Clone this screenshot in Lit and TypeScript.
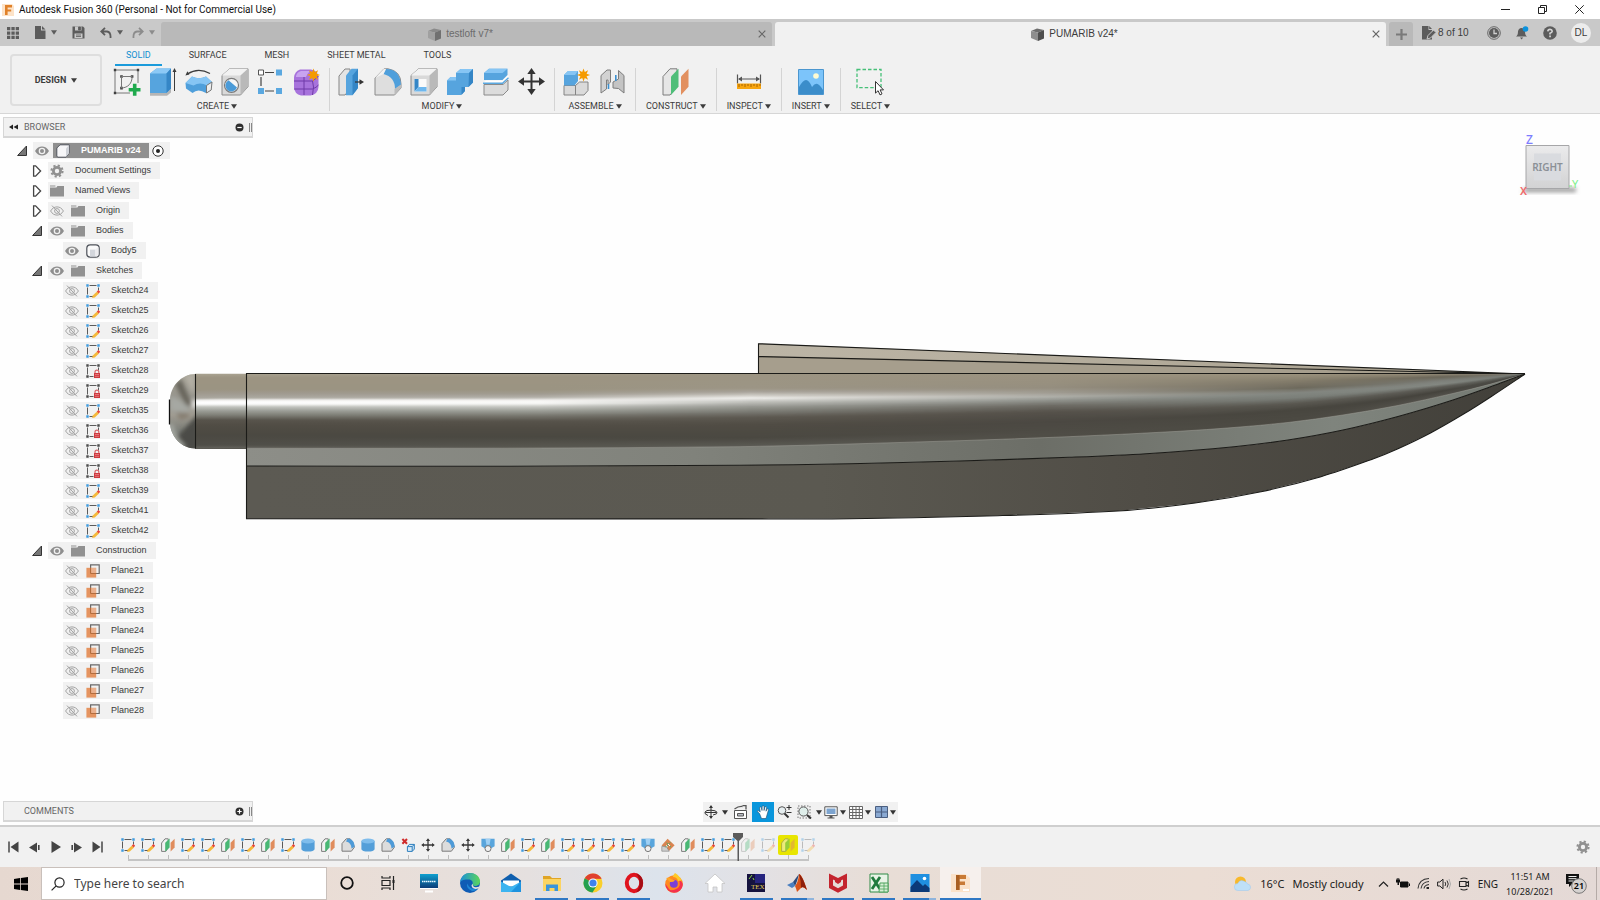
import { LitElement, html, svg, css, nothing, TemplateResult, SVGTemplateResult } from "lit";
import { customElement, property } from "lit/decorators.js";
import { classMap } from "lit/directives/class-map.js";

/* ------------------------------------------------------------------ icons */

const dotted = (corner: string) => svg`
  <path d="M3.500 1.500h7M1.500 3.500v7M3.500 12.500h4M12.500 3.500v3" stroke="#5a5a5a" fill="none"/>
  <path d="M.3.300h2.400v2.400H.3zM11.300.300h2.400v2.400h-2.400zM.3 11.300h2.400v2.400H.3z" fill=${corner}/>`;

const planes = svg`
  <path d="M.6 5 4 .8h3.2v9L4.8 13.4H.6z" fill="#f2f2f2" stroke="#7d7d7d"/>
  <path d="M4.2 4.8 8.6.6v9L4.2 13.6z" fill="#49b774"/>
  <path d="M9.6 4.8 13.6.8v8.8l-4 4z" fill="#e08c5c"/>`;

const star = (x: number, y: number) => svg`
  <path transform="translate(${x} ${y})" d="M0-6.6 1.3-3 4.6-4.7 3.1-1.3 6.6 0 3.1 1.3 4.6 4.7 1.3 3 0 6.6-1.3 3-4.6 4.7-3.1 1.3-6.6 0-3.1-1.3-4.6-4.7-1.3-3z" fill="#f59b00"/>`;

const gear = svg`
  <circle cx="7" cy="7" r="3.6" fill="none" stroke="#909090" stroke-width="2.8"/>
  <circle cx="7" cy="7" r="5.6" fill="none" stroke="#909090" stroke-width="2" stroke-dasharray="2.2 2.2"/>`;

const I14: Record<string, SVGTemplateResult> = {
  sketch: svg`${dotted("#3d9be0")}
    <path d="m6 14 .8-2.600 4.200-4 2 2-4.200 4z" fill="#f5b93c"/>
    <path d="m10.800 7.600 1.600-1.600 1.800 1.800-1.600 1.600z" fill="#e8483c"/>`,
  locked: svg`${dotted("#4a4a4a")}
    <path d="M9 9V8a1.800 1.800 0 0 1 3.800 0V9" fill="none" stroke="#d9676b" stroke-width="1.200"/>
    <path d="M8 9h6v5H8z" fill="#cf3a40"/><path d="M9 10.500h4M9 12.300h4" stroke="#ef8f92" stroke-width=".7"/>`,
  plane: svg`<path d="M4.6 9.4V.9h8.6v8.6H5" fill="none" stroke="#6a6a6a" stroke-width="1.2"/>
    <path d="M.4 3.8h9.8v9.8H.4z" fill="#e38a50" fill-opacity=".9"/><path d="M4.6 3.8v5.6h5.6" fill="none" stroke="#b06a3c"/>
    <path d="M5.2 4h4.8v5H5.2z" fill="#ebb08c"/>`,
  planes,
  folder: svg`<path d="M0 1.4h5.4v1.2H0zM0 3.4h6.4l1-1.4H14v10.6H0z" fill="#919191"/>`,
  gear,
  body: svg`<rect x=".8" y=".8" width="12.4" height="12.4" rx="3.4" fill="#fafafa" stroke="#4e525a" stroke-width="1.2"/>
    <path d="M4 5.6h5.4v7H4z" fill="#d3d6dc"/><path d="M9.4 5.6 12.4 3v8l-1.8 1.6H9.4z" fill="#ececef"/>`,
  cube: svg`<path d="M.8 4 4 .8h9.2v8.4L10 13.2H1.6L.8 12z" fill="#f6f6f8" stroke="#51555d" stroke-width="1"/>
    <path d="M10 4.4 13 1v8l-3 4z" fill="#cfd2d8"/>`,
  eye: svg`<path d="M0 7c1.8-3.2 4.2-4.6 7-4.6S12.200 3.800 14 7c-1.800 3.200-4.200 4.600-7 4.600S1.800 10.200 0 7z" fill="#8e8e8e"/>
    <circle cx="7" cy="7" r="3.300" fill="#f1f1f1"/><circle cx="7" cy="7" r="2" fill="#8e8e8e"/>`,
  eyeOff: svg`<path d="M.6 7C2.200 4.200 4.400 2.900 7 2.900S11.800 4.200 13.400 7C11.800 9.800 9.600 11.100 7 11.100S2.200 9.800.6 7z" fill="none" stroke="#a3a3a3"/>
    <circle cx="7" cy="7" r="2.400" fill="none" stroke="#a3a3a3"/><path d="m2 1.600 10 10.800" stroke="#a3a3a3"/>`,
  cylinder: svg`<path d="M.4 3v8c0 1.600 3 2.600 6.600 2.600s6.600-1 6.600-2.600V3z" fill="#549fd9"/><ellipse cx="7" cy="3" rx="6.600" ry="2.400" fill="#7fbdec"/>`,
  fillet: svg`<path d="M1 13.200V5.600L5.200.8h4L12 4.800l1.400 4.400-3 4z" fill="#dcdcdc" stroke="#7c7c7c"/>
    <path d="M6.600.6c4 .2 7 3 7 8.200l-3 1.600C10.200 6.600 8.600 4.400 5 3.600z" fill="#4e9bd8"/>`,
  remove: svg`<path d="m1.400 1 4.600 4.800M6 1 1.400 5.800" stroke="#cf2b2b" stroke-width="2"/>
    <path d="M6.400 8.600h4.800v4.800H6.400zM6.400 8.600l2-2.200h4.900v4.700l-2.100 2.300M11.200 8.600l2.100-2.200" fill="#d6e9f7" stroke="#2d7fbd"/>`,
  move: svg`<path d="M7 1.500v11M1.500 7h11" stroke="#3a3a3a" stroke-width="1.300"/>
    <path d="M7 .2 9.100 3H4.900zM7 13.800 9.100 11H4.900zM.2 7 3 4.900v4.200zM13.800 7 11 4.900v4.200z" fill="#3a3a3a"/>`,
  loft: svg`<path d="M.4.800h13.200v7.400l-3.400 2H3.800l-3.400-2z" fill="#59a5dc"/><path d="M4.400.800h5.200l-1 6H5.400z" fill="#9fd0f4"/>
    <circle cx="7" cy="10.600" r="3" fill="#f1f1f1" stroke="#777"/>`,
  patch: svg`<path d="m.6 7.600 6-6.800 7 6.400-5.400 5.600z" fill="#d98450"/><path d="M.8 8.400h4.400l3 4.800H.8z" fill="#cfcfcf" stroke="#888" stroke-width=".7"/>
    <path d="m4.400 9.400 5-5M5.600 4.800l4.400 4.400" stroke="#4fae6e"/><path d="m7 6 2 2M5 7.400l1.600 1.400" stroke="#fff"/>`,
};

const I28: Record<string, SVGTemplateResult> = {
  sketch: svg`<path d="M2 2h23M2 2v23h15M25 2v13" stroke="#777" fill="none"/>
    <path d="M.8.800h2.400v2.400H.8zM23.800.800h2.400v2.400h-2.400zM.8 23.800h2.400v2.400H.8zM7.200 7.200h2.600v2.600H7.200zM17.800 7.200h2.600v2.600h-2.600zM7.200 18.800h2.600v2.600H7.200z" fill="#3f3f3f"/>
    <path d="M8.500 8.500v11.600M8.500 8.500h10.600c0 7-4 11-10.600 11.600" stroke="#777" fill="none"/>
    <path d="M19.900 15.800h3.600V20h4v3.600h-4v4.200h-3.600v-4.200h-4.200V20h4.200z" fill="#1faa4d"/>`,
  extrude: svg`<path d="M1 24.500h17l4-4v4l-4 3.200H1z" fill="#b5b5b5"/><path d="M1 5.500 7.500.5H22v20l-4.500 4.500H1z" fill="#56a4de"/>
    <path d="M1 5.500 7.500.5H22l-4.500 5z" fill="#8cc9f6"/><path d="M17.500 5.500 22 .5v20L17.500 25z" fill="#3586c6"/>
    <path d="M25.500 3v20" stroke="#3c3c3c"/><path d="m25.500 0 2 4h-4z" fill="#3c3c3c"/>`,
  revolve: svg`<path d="M2.500 6Q13-1 25 5.500" stroke="#3c3c3c" fill="none" stroke-width="1.200"/><path d="m.4 7.400 2-4.200 2 3.200z" fill="#3c3c3c"/>
    <path d="M.5 15 7 8.500q7 3.500 14 0l6 5.500-1 8-5 3q-8-5-13.500 0L1 20.500z" fill="#4f9fdb"/>
    <path d="M.5 15 7 8.500q7 3.500 14 0l6 5.500-5 3.500q-7-4-13.500 0z" fill="#86c5f4"/>
    <path d="m21.500 17.500 5.500-3.500-.8 8-4.700 3z" fill="#eee" stroke="#777"/>`,
  hole: svg`<path d="M1 7.500 8.500.8H27v18L19.500 27H1z" fill="#d9d9d9" stroke="#8a8a8a"/><path d="M1 7.500 8.500.8H27l-7.500 6.700z" fill="#f2f2f2"/>
    <path d="M19.500 7.500 27 .8v18L19.500 27z" fill="#b9b9b9"/><circle cx="10.500" cy="17.300" r="7" fill="#f6f6f6" stroke="#7a7a7a" stroke-width="1.200"/>
    <path d="M7.500 12.200a6 6 0 1 0 8.500 7.400z" fill="#4b9bd8"/>`,
  pattern: svg`<path d="M8 4.500h9M4 9v9M8 23h9" stroke="#444" stroke-width="1.200"/><path d="M1.500 2h5v5h-5z" fill="#fff" stroke="#555"/>
    <path d="M19 1.500h6v6h-6zM1 20h6v6H1zM19 20h6v6h-6z" fill="#5aa8e0"/>`,
  form: svg`<path d="M1 9.500q.5-6 6-8h11q7 1 7.500 8V19q-.5 7-8 8.500H8q-6.500-1.500-7-8z" fill="#a773dc"/>
    <path d="M3 8q1-4 5-5h9q-3 3-4 6H3z" fill="#c8a4f0"/><path d="M1 13h18.500q4.500-3 6-5M11 27V9M19.500 27q2-9 0-14M1 21h18.500q4-1.500 6-4" stroke="#6f3ba8" fill="none"/>${star(20.500, 7)}`,
  press: svg`<path d="M1 8 7 1h5v20l-5 6H1z" fill="#e4e4e4" stroke="#858585"/><path d="M8 7.500 13.500.8H20V20l-5.500 7.200H8z" fill="#56a4de"/>
    <path d="M14.500 7.500 20 .8V20l-5.500 7.200z" fill="#3586c6"/><path d="M17 14h7" stroke="#333" stroke-width="1.200"/><path d="m26 14-4.500-2.800v5.600z" fill="#333"/>`,
  fillet: svg`<path d="M1 10 10 .8h4Q27 3 27 16v4l-6.500 7H1z" fill="#dedede" stroke="#8a8a8a"/><path d="M12 1q14 0 15 16l-6 4Q21 9 9.500 6z" fill="#4f9fdb"/>
    <path d="M20.500 21 27 16.500V20l-6.500 7z" fill="#bcbcbc"/><path d="M12 1 9.500 6 1 10 10 .8z" fill="#f2f2f2"/>`,
  shell: svg`<path d="M1 7.500 8.500.8H27v18L19.500 27H1z" fill="#d9d9d9" stroke="#8a8a8a"/><path d="M1 7.500 8.500.8H27l-7.500 6.700z" fill="#f2f2f2"/>
    <path d="M19.500 7.500 27 .8v18L19.500 27z" fill="#b9b9b9"/><path d="M4.500 11h12v12.500h-12z" fill="#fafafa"/>
    <path d="M4.500 11h4v8l-4 4.500z" fill="#3586c6"/><path d="m4.500 23.500 4-4.500h8v4.500z" fill="#6db7ee"/>`,
  combine: svg`<path d="M1 12.500 4.500 9H10V5l4.500-4H27v13.500L22.500 19H19v4l-4 4H1z" fill="#56a4de"/>
    <path d="M10 5l4.500-4H27l-4 4zM1 12.500 4.500 9H10v3.500z" fill="#86c5f4"/><path d="M23 5l4-4v13.500L22.500 19zM15.500 19H19v4l-3.500 4z" fill="#3586c6"/>`,
  split: svg`<path d="M2 16.500h19l5-4.500v10l-5 5H2z" fill="#dcdcdc" stroke="#8a8a8a"/><path d="M2 5 7 .800h18.500V7l-5 5H2z" fill="#56a4de"/>
    <path d="M2 5 7 .8h18.500l-5 4.200z" fill="#86c5f4"/><path d="M.5 15.500 4 12.500h16.500L26.500 7v3.500l-6 5z" fill="#fff"/><path d="M1 15.300h19.500l6-5.500" stroke="#5aa8e0" fill="none" stroke-width="1.400"/>`,
  move: svg`<path d="M13.500 3v21M3 13.500h21" stroke="#333" stroke-width="2"/>
    <path d="M13.500 0l4.200 6H9.300zM13.500 27l4.200-6H9.300zM0 13.500l6-4.200v8.400zM27 13.500l-6-4.200v8.400z" fill="#333"/>`,
  component: svg`<path d="M1 17.500h11.500V27H1zM12.500 17.500 16.500 14H25v8.500L21 27h-8.500z" fill="#dadada" stroke="#848484"/><path d="M1 7 5 3h10v10l-3.500 4.500H1z" fill="#56a4de"/>
    <path d="M1 7l4-4h10l-3 4z" fill="#86c5f4"/>${star(20.500, 7)}`,
  joint: svg`<path d="M2 7.500 8 2h3.500v12L9 16.500V12H7.500v9L2 25z" fill="#d2d2d2" stroke="#7d7d7d"/>
    <path d="M25 25V7.500L19.500 2.500V11L14 14v6l5.500.5L25 25z" fill="#c4c4c4" stroke="#7d7d7d"/><path d="M16.800 7v6M9.500 16v5" stroke="#3b90d0" stroke-width="1.600"/>`,
  construct: svg`<path d="M1 8.500 8 .8h7v18L8 27H1z" fill="#e6e6e6" stroke="#7d7d7d"/><path d="M9 8.500 16.500.8v18L9 27z" fill="#4fbe79"/><path d="M19 8.500 26.500.800v18L19 27z" fill="#e2905f"/>`,
  inspect: svg`<path d="M2.500 6.500v9M25.500 6.500v9M4 11h20" stroke="#555" stroke-width="1.200"/><path d="m3 11 4-2.500v5zM25 11l-4-2.500v5z" fill="#555"/>
    <path d="M2 15.500h24V21H2z" fill="#f7a510"/><path d="M4 16v3M7 16v2M10 16v3M13 16v2M16 16v3M19 16v2M22 16v3M25 16v2" stroke="#a86400"/>`,
  insert: svg`<path d="M1.500 1.500h25v25h-25z" fill="#7cc4fa" stroke="#4b96cf"/><path d="M2 19q4-7 7-7t6 7q3-4 5.500-3t5.500 6v4H2z" fill="#3b8dca"/><circle cx="19" cy="8" r="2.800" fill="#fffbd2"/>`,
  select: svg`<path d="M1 1.500h24v18.200H1z" fill="none" stroke="#46c078" stroke-width="1.300" stroke-dasharray="3.500 2"/>
    <path d="M19.500 13.500v11.600l2.600-2.400 1.900 4.200 2-1-1.900-4h3.400z" fill="#fff" stroke="#333"/>`,
};

const caret = () => html`<svg class="caret" viewBox="0 0 6 5" aria-hidden="true"><path d="M0 .3h6L3 4.700z" fill="currentColor"/></svg>`;
const i14 = (n: string) => html`<svg class="i14" viewBox="0 0 14 14" aria-hidden="true">${I14[n]}</svg>`;
const i28 = (n: string) => html`<svg class="i28" viewBox="0 0 28 28" aria-hidden="true">${I28[n]}</svg>`;
const box = (w: number, h: number, body: SVGTemplateResult) =>
  html`<svg width=${w} height=${h} viewBox="0 0 ${w} ${h}" aria-hidden="true">${body}</svg>`;

const shared = css`
  :host, *, *::before, *::after { box-sizing: border-box; }
  button { font: inherit; color: inherit; background: none; border: 0; padding: 0; margin: 0; display: inline-flex; align-items: center; justify-content: center; white-space: nowrap; }
  svg { display: block; flex: none; }
  .i14 { width: 14px; height: 14px; }
  .i28 { width: 28px; height: 28px; }
  .caret { width: 6px; height: 5px; }
`;

/* ------------------------------------------------------------- title bars */

@customElement("window-header")
export class WindowHeader extends LitElement {
  static styles = [shared, css`
    :host { display: block; color: #3c3c3c; }
    .title { height: 19px; display: flex; align-items: center; gap: 5px; padding: 0 2px; background: #fff; color: #111; font: 10px/19px "Roboto", sans-serif; }
    .title h1 { font: inherit; margin: 0; flex: 1; }
    .win { display: flex; }
    .win button { width: 37px; height: 19px; }
    .bar { height: 27px; display: flex; background: #c9c9c9; font: 10px/12px "Liberation Sans", sans-serif; }
    .quick { width: 161px; display: flex; align-items: center; padding-left: 7px; color: #5c5c5c; }
    .quick .pair { display: flex; align-items: center; gap: 5px; }
    .quick .s1 { margin-left: 14px; }
    .quick .s2 { margin-left: 15px; }
    .quick .s3 { margin-left: 15px; }
    .quick .s4 { margin-left: 9px; opacity: .55; }
    .tabs { flex: 1; display: flex; gap: 3px; padding-top: 3px; }
    .tab { flex: 1; display: flex; align-items: center; padding: 0 4px; border-radius: 3px 3px 0 0; background: #b9b9b9; color: #6b6b6b; }
    .tab.on { background: #f1f1f1; color: #3c3c3c; }
    .tab .name { flex: 1; gap: 5px; height: 24px; }
    .close { width: 12px; height: 12px; color: #666; }
    .right { width: 211px; display: flex; align-items: center; margin-left: 3px; }
    .plus { align-self: flex-end; width: 24px; height: 24px; background: #b9b9b9; border-radius: 3px 3px 0 0; color: #7a7a7a; }
    .count { gap: 2px; margin-left: 9px; }
    .tools { flex: 1; display: flex; justify-content: flex-end; gap: 14px; padding-right: 9px; align-items: center; }
    .avatar { width: 20px; height: 20px; border-radius: 50%; background: #ececec; }
  `];

  private tab(name: string, on: boolean) {
    const [a, b, c] = on ? ["#6d6d6d", "#8e8e8e", "#4e4e4e"] : ["#8a8a8a", "#a0a0a0", "#707070"];
    return html`<div class=${classMap({ tab: true, on })}>
      <button class="name">${box(13, 13, svg`<path d="M0 3 6 .5 13 2 7 4.500z" fill=${a}/><path d="M0 3l7 1.500V13L0 10z" fill=${b}/><path d="m7 4.500 6-2.500v8.500L7 13z" fill=${c}/>`)}${name}</button>
      <button class="close" aria-label="Close ${name}">${box(8, 8, svg`<path d="m.7.7 6.600 6.600M7.300.7.7 7.300" stroke="currentColor" stroke-width="1.200"/>`)}</button>
    </div>`;
  }

  render() {
    return html`
      <header class="title">
        ${box(12, 14, svg`<path d="M0 1h10l2 2v10H0z" fill="#fde3c8"/><path d="M3 2h7v2.400H5.600v2h3.600v2.200H5.600V12H3z" fill="#e0812a"/>`)}
        <h1>Autodesk Fusion 360 (Personal - Not for Commercial Use)</h1>
        <div class="win">
          <button aria-label="Minimize">${box(9, 9, svg`<path d="M0 4.500h9" stroke="#222"/>`)}</button>
          <button aria-label="Restore">${box(9, 9, svg`<path d="M.5 2.500h6v6h-6zM2.500 2.500v-2h6v6h-2" stroke="#222" fill="none"/>`)}</button>
          <button aria-label="Close">${box(9, 9, svg`<path d="m.3.3 8.400 8.400M8.700.3.3 8.700" stroke="#222"/>`)}</button>
        </div>
      </header>
      <nav class="bar" aria-label="Documents">
        <div class="quick">
          <button aria-label="Data panel">${box(12, 12, svg`<path d="M0 0h3.300v3.300H0zM4.400 0h3.300v3.300H4.400zM8.700 0H12v3.300H8.700zM0 4.400h3.300v3.300H0zM4.400 4.400h3.300v3.300H4.400zM8.700 4.400H12v3.300H8.700zM0 8.700h3.300V12H0zM4.400 8.700h3.300V12H4.400zM8.700 8.700H12V12H8.700z" fill="currentColor"/>`)}</button>
          <button class="pair s1" aria-label="File">${box(13, 13, svg`<path d="M2 0h6v4.500h4.500V13H2zM9 0l3.500 3.500H9z" fill="currentColor"/>`)}${caret()}</button>
          <button class="s2" aria-label="Save">${box(13, 13, svg`<path d="M.5.5h10.500l1.500 1.500v10.500H.5z" fill="currentColor"/><path d="M3 .5h6.500v4H3zM2.500 7.500h8V12h-8z" fill="#c9c9c9"/><path d="M6.500 1h2v3h-2zM4 9h5M4 10.500h5" fill="currentColor" stroke="currentColor" stroke-width=".8"/>`)}</button>
          <button class="pair s3" aria-label="Undo">${box(12, 12, svg`<path d="M2 4.500h5q4 .5 3.500 6.500M5 .8 1.200 4.500 5 8.200" fill="none" stroke="currentColor" stroke-width="1.800"/>`)}${caret()}</button>
          <button class="pair s4" aria-label="Redo">${box(12, 12, svg`<path d="M10 4.500H5Q1 5 1.500 11M7 .8l3.800 3.700L7 8.200" fill="none" stroke="currentColor" stroke-width="1.800"/>`)}${caret()}</button>
        </div>
        <div class="tabs">${this.tab("testloft v7*", false)}${this.tab("PUMARIB v24*", true)}</div>
        <div class="right">
          <button class="plus" aria-label="New design">${box(11, 11, svg`<path d="M5.500 0v11M0 5.500h11" stroke="currentColor" stroke-width="2.200"/>`)}</button>
          <button class="count">${box(14, 14, svg`<path d="M0 0h6.500v4L10 4v9.500H0z" fill="#5c5c5c"/><path d="m5 13 1-3.500L11.500 4 14 6.500 8.500 12z" fill="#5c5c5c" stroke="#c9c9c9"/><path d="M7.200 0 10 3H7.200z" fill="#5c5c5c"/>`)}8 of 10</button>
          <div class="tools">
            <button aria-label="Job status">${box(14, 14, svg`<circle cx="7" cy="7" r="6.300" fill="none" stroke="#666"/><circle cx="7" cy="7" r="5" fill="#5c5c5c"/><path d="M7 3.500V7.500h3" stroke="#d0d0d0" stroke-width="1.300" fill="none"/>`)}</button>
            <button aria-label="Notifications">${box(14, 14, svg`<path d="M1 10.500q2-1 2-5Q3.500 2 6.500 2t3.500 3.500q0 4 2 5zM5 11.500h3.200L6.600 13.500z" fill="#5c5c5c"/><circle cx="10.500" cy="3" r="2.800" fill="#0a92dd"/>`)}</button>
            <button aria-label="Help">${box(14, 14, svg`<circle cx="7" cy="7" r="6.800" fill="#5c5c5c"/><path d="M4.800 5.400Q5 3.400 7 3.400t2.200 1.800Q9.200 6.300 7 7.300v1.200" stroke="#d6d6d6" stroke-width="1.600" fill="none"/><path d="M6.200 9.600h1.700v1.600H6.200z" fill="#d6d6d6"/>`)}</button>
            <button class="avatar" aria-label="Account">DL</button>
          </div>
        </div>
      </nav>`;
  }
}

/* ---------------------------------------------------------------- toolbar */

const GROUPS: { label: string; icons: string[] }[] = [
  { label: "CREATE", icons: ["sketch", "extrude", "revolve", "hole", "pattern", "form"] },
  { label: "MODIFY", icons: ["press", "fillet", "shell", "combine", "split", "move"] },
  { label: "ASSEMBLE", icons: ["component", "joint"] },
  { label: "CONSTRUCT", icons: ["construct"] },
  { label: "INSPECT", icons: ["inspect"] },
  { label: "INSERT", icons: ["insert"] },
  { label: "SELECT", icons: ["select"] },
];

@customElement("tool-ribbon")
export class ToolRibbon extends LitElement {
  static styles = [shared, css`
    :host { display: flex; gap: 3px; height: 68px; padding: 0 10px; background: #f1f1f1; border-bottom: 1px solid #d6d6d6; color: #3c3c3c; font: 9px/12px "Roboto", sans-serif; }
    .design { width: 92px; height: 52px; margin-top: 8px; gap: 5px; border: 2px solid #dedede; border-radius: 4px; font-weight: 700; }
    .tabs { display: flex; gap: 16px; padding-left: 10px; height: 20px; }
    .tab { padding: 0 11px; border-bottom: 2px solid transparent; }
    .tab.on { color: #0f8fd0; border-color: #1b9bdb; }
    .groups { display: flex; padding-top: 2px; }
    .group { display: flex; flex-direction: column; align-items: center; gap: 4px; padding: 0 4px; height: 43px; border-right: 1px solid #d4d4d4; }
    .group:last-child { border: 0; }
    .icons { display: flex; }
    .icons button { width: 36px; height: 28px; }
    .label { gap: 2px; padding: 0 6px; }
  `];
  render() {
    return html`
      <button class="design">DESIGN ${caret()}</button>
      <div>
        <div class="tabs" role="tablist">
          ${["SOLID", "SURFACE", "MESH", "SHEET METAL", "TOOLS"].map((t, i) => html`<button role="tab" class=${classMap({ tab: true, on: i === 0 })}>${t}</button>`)}
        </div>
        <div class="groups">
          ${GROUPS.map((g) => html`<div class="group">
            <div class="icons">${g.icons.map((n) => html`<button aria-label=${n}>${i28(n)}</button>`)}</div>
            <button class="label">${g.label}${caret()}</button>
          </div>`)}
        </div>
      </div>`;
  }
}

/* ----------------------------------------------------------- browser tree */

interface Node { label: string; level: number; eye?: "eye" | "eyeOff"; icon: string; open?: boolean; root?: boolean }

const LOCKED = new Set([28, 29, 36, 37, 38]);
const NODES: Node[] = [
  { label: "PUMARIB v24", level: 0, eye: "eye", icon: "cube", open: true, root: true },
  { label: "Document Settings", level: 1, icon: "gear", open: false },
  { label: "Named Views", level: 1, icon: "folder", open: false },
  { label: "Origin", level: 1, eye: "eyeOff", icon: "folder", open: false },
  { label: "Bodies", level: 1, eye: "eye", icon: "folder", open: true },
  { label: "Body5", level: 2, eye: "eye", icon: "body" },
  { label: "Sketches", level: 1, eye: "eye", icon: "folder", open: true },
  ...[24, 25, 26, 27, 28, 29, 35, 36, 37, 38, 39, 41, 42].map((n): Node => ({ label: `Sketch${n}`, level: 2, eye: "eyeOff", icon: LOCKED.has(n) ? "locked" : "sketch" })),
  { label: "Construction", level: 1, eye: "eye", icon: "folder", open: true },
  ...[21, 22, 23, 24, 25, 26, 27, 28].map((n): Node => ({ label: `Plane${n}`, level: 2, eye: "eyeOff", icon: "plane" })),
];

@customElement("side-panel")
export class SidePanel extends LitElement {
  @property() heading = "";
  @property({ type: Boolean }) collapsed = false;
  static styles = [shared, css`
    :host { display: flex; align-items: center; width: 250px; height: 21px; padding: 0 0 0 5px; background: #f1f1f1; border: 1px solid #d6d6d6; border-bottom-width: 2px; color: #666; font: 9px/12px "Roboto", sans-serif; }
    .fold { width: 9px; margin-right: 6px; height: 12px; }
    h2 { font: inherit; margin: 0; flex: 1; }
    .grip { width: 3px; height: 9px; margin-left: 5px; border: solid #888; border-width: 0 1px; }
  `];
  render() {
    return html`
      <span class="fold">${this.collapsed ? nothing : box(9, 12, svg`<path d="M4 3.500v5L0 6zM9 3.500v5L4.500 6z" fill="#222"/>`)}</span>
      <h2>${this.heading}</h2>
      <button aria-label="Toggle ${this.heading}">${box(9, 9, svg`<circle cx="4.500" cy="4.500" r="4" fill="#2f2f2f"/><path d=${this.collapsed ? "M2.300 4.500h4.400M4.500 2.300v4.400" : "M2.300 4.500h4.400"} stroke="#fff" stroke-width="1.200"/>`)}</button>
      <span class="grip"></span>`;
  }
}

@customElement("browser-tree")
export class BrowserTree extends LitElement {
  static styles = [shared, css`
    :host { display: block; color: #3a3a3a; font: 9px/17px "Liberation Sans", sans-serif; }
    ul { list-style: none; margin: 0; padding: 0; display: flex; flex-direction: column; gap: 3px; }
    li { display: flex; gap: 6px; height: 17px; }
    .l0 { padding-left: 17px; } .l1 { padding-left: 32px; } .l2 { padding-left: 47px; }
    .twisty { width: 10px; }
    .pill { display: flex; align-items: center; background: #f1f1f1; padding: 0 9px 0 2px; }
    .pill .name { gap: 11px; height: 17px; }
    .eye + .name { margin-left: 7px; }
    .root { padding-right: 6px; }
    .root .eye + .name { margin-left: 4px; background: #909090; color: #fff; font-weight: 700; padding: 0 8px 0 3px; height: 15px; gap: 11px; }
    .pick { margin-left: 3px; }
    .eye { width: 14px; }
  `];
  private twisty(n: Node) {
    if (n.open === undefined) return html`<span class="twisty"></span>`;
    return html`<button class="twisty" aria-label="Expand ${n.label}">${n.open
      ? box(10, 12, svg`<path d="M9.500 1v9.500H.6z" fill="#777" stroke="#333"/>`)
      : box(10, 12, svg`<path d="M1.600.8h2L8.600 6l-5 5.200h-2z" fill="#fff" stroke="#444" stroke-width="1.300"/>`)}</button>`;
  }
  render() {
    return html`<ul>${NODES.map((n) => html`<li class="l${n.level}">
      ${this.twisty(n)}
      <div class=${classMap({ pill: true, root: !!n.root })}>
        ${n.eye ? html`<button class="eye" aria-label="Visibility of ${n.label}">${i14(n.eye)}</button>` : nothing}
        <button class="name">${i14(n.icon)}${n.label}</button>
        ${n.root ? html`<button class="pick" aria-label="Activate">${box(12, 12, svg`<circle cx="6" cy="6" r="5.200" fill="#fff" stroke="#333"/><circle cx="6" cy="6" r="2" fill="#222"/>`)}</button>` : nothing}
      </div>
    </li>`)}</ul>`;
  }
}

/* ------------------------------------------------------------- hull model */

type Pt = [number, number];
const seg = (p: Pt[]): string => {
  let d = "";
  for (let i = 0; i < p.length - 1; i++) {
    const a = p[Math.max(0, i - 1)], b = p[i], c = p[i + 1], e = p[Math.min(p.length - 1, i + 2)];
    const k = (c[0] - b[0]) / 3;
    const s1 = (c[1] - a[1]) / (c[0] - a[0] || 1), s2 = (e[1] - b[1]) / (e[0] - b[0] || 1);
    d += `C${(b[0] + k).toFixed(1)} ${(b[1] + s1 * k).toFixed(2)} ${(c[0] - k).toFixed(1)} ${(c[1] - s2 * k).toFixed(2)} ${c[0]} ${c[1].toFixed(2)}`;
  }
  return d;
};
const curve = (p: Pt[]) => `M${p[0][0]} ${p[0][1].toFixed(2)}${seg(p)}`;
const backLine = (p: Pt[]) => [...p].reverse().map(([x, y]) => `L${x} ${y}`).join("");

const TOP = 373.7;
const BILGE: Pt[] = [[195, 448.5], [246, 448.3], [500, 448.200], [740, 446.700], [850, 444], [960, 440.700], [1069, 436.700], [1179, 431.300], [1234, 427.500], [1288, 422.500], [1343, 415], [1398, 405.500], [1453, 393.500], [1490, 384.300], [1525, 374]];
const CHINE: Pt[] = [[246, 466], [500, 466.300], [740, 465.300], [850, 463.700], [960, 461], [1069, 457.300], [1146, 453.700], [1234, 446.700], [1288, 440], [1343, 430], [1398, 416.500], [1453, 400], [1497, 384.500], [1525, 374]];
const KEEL: Pt[] = [[246, 518.700], [740, 518.900], [850, 518.700], [987, 516], [1118, 511], [1195, 503], [1261, 491.700], [1321, 476.700], [1371, 459.700], [1398, 448.700], [1431, 432.700], [1464, 413.800], [1491, 396.700], [1525, 374]];

/* Shading across the tube, from gunwale (0) to bilge (1), at stations along its length. */
const STATIONS: { x: number; stops: [number, string][] }[] = [
  { x: 195, stops: [[0, "#aaa391"], [.05, "#9c9482"], [.21, "#9b9482"], [.26, "#9f998e"], [.325, "#a9a69e"], [.355, "#f0efed"], [.38, "#ffffff"], [.41, "#fbfbfa"], [.445, "#c0c2bd"], [.5, "#9a9c95"], [.56, "#7c7c74"], [.62, "#57534b"], [.7, "#504c44"], [.82, "#4b4942"], [.96, "#4f4e48"], [1, "#65645e"]] },
  { x: 540, stops: [[0, "#a39b89"], [.05, "#9c9482"], [.22, "#9b9482"], [.27, "#a09b90"], [.32, "#b4b1aa"], [.36, "#f8f7f5"], [.4, "#f8f8f6"], [.44, "#c8c9c4"], [.5, "#9b9d96"], [.57, "#74736b"], [.64, "#57534b"], [.72, "#504c44"], [.85, "#4a4841"], [1, "#5a5952"]] },
  { x: 750, stops: [[0, "#9c9482"], [.2, "#9c9585"], [.25, "#a8a39a"], [.3, "#d0cdc7"], [.335, "#f0efec"], [.38, "#c6c6c1"], [.45, "#999a94"], [.53, "#77766f"], [.6, "#5c5850"], [.7, "#504c44"], [.88, "#4a4841"], [1, "#5c5b55"]] },
  { x: 1050, stops: [[0, "#9c9380"], [.22, "#958e7f"], [.3, "#a09c92"], [.36, "#b0b0aa"], [.42, "#8f918b"], [.5, "#6e6c65"], [.6, "#55514a"], [.75, "#4b4842"], [1, "#504e47"]] },
  { x: 1300, stops: [[0, "#9c937e"], [.15, "#837c6b"], [.3, "#6d695c"], [.4, "#838680"], [.5, "#7b7f79"], [.62, "#5a5851"], [.75, "#48463f"], [1, "#4c4a43"]] },
  { x: 1440, stops: [[0, "#938a76"], [.15, "#6a6558"], [.32, "#7d7f79"], [.46, "#848882"], [.6, "#5c5b55"], [.78, "#45433d"], [1, "#55544e"]] },
  { x: 1525, stops: [[0, "#7c766a"], [.4, "#747872"], [1, "#3b3a35"]] },
];
const rgb = (h: string) => [1, 3, 5].map((i) => parseInt(h.slice(i, i + 2), 16));
const shade = (stops: [number, string][], f: number) => {
  let i = 0;
  while (i < stops.length - 2 && stops[i + 1][0] < f) i++;
  const [f0, c0] = stops[i], [f1, c1] = stops[i + 1];
  const t = Math.min(1, Math.max(0, (f - f0) / (f1 - f0)));
  const a = rgb(c0), b = rgb(c1);
  return `rgb(${a.map((v, k) => Math.round(v + (b[k] - v) * t)).join(",")})`;
};

@customElement("hull-model")
export class HullModel extends LitElement {
  static styles = css`:host { display: block; min-height: 0; } svg { display: block; width: 100%; height: 100%; } .edge { fill: none; stroke: #1b1b18; stroke-width: 1.1; }`;
  render() {
    const N = 75;
    const strips = Array.from({ length: N }, (_, i) => i);
    return html`<svg viewBox="0 114 1600 711" role="img" aria-label="Hull, right view">
      <defs>
        ${strips.map((i) => svg`<linearGradient id="s${i}" gradientUnits="userSpaceOnUse" x1="195" x2="1525" y1="0" y2="0">
          ${STATIONS.map((s) => svg`<stop offset=${(s.x - 195) / 1330} stop-color=${shade(s.stops, (i + .5) / N)}/>`)}
        </linearGradient>`)}
        <linearGradient id="keel"><stop offset="0" stop-color="#5c5a53"/><stop offset=".45" stop-color="#5b5951"/><stop offset=".7" stop-color="#504d46"/><stop offset="1" stop-color="#42403a"/></linearGradient>
        <linearGradient id="band"><stop offset="0" stop-color="#8d8e88"/><stop offset=".35" stop-color="#80827b"/><stop offset=".62" stop-color="#6c6e67"/><stop offset=".85" stop-color="#7f847d"/><stop offset="1" stop-color="#747972"/></linearGradient>
        <linearGradient id="cabin"><stop offset="0" stop-color="#bcb5a6"/><stop offset="1" stop-color="#a9a18f"/></linearGradient>
        <linearGradient id="cap" x1="0" y1="0" x2="0" y2="1"><stop offset="0" stop-color="#a9a699"/><stop offset=".3" stop-color="#96948c"/><stop offset=".55" stop-color="#a09c92"/><stop offset=".75" stop-color="#7c7e78"/><stop offset="1" stop-color="#5e5f59"/></linearGradient>
        <filter id="soft" x="-50%" y="-50%" width="200%" height="200%"><feGaussianBlur stdDeviation="2.200"/></filter>
        <clipPath id="capClip"><path d="M195.500 374C181 374 170 387 170 400v22c0 14 11 26.500 25.500 26.500z"/></clipPath>
      </defs>
      <path d="M758.500 343.500 1525 374H758.500z" fill="url(#cabin)"/>
      <path d="M758.500 356.500 1525 374H758.500z" fill="#a69e8d"/>
      <path class="edge" d="M758.500 374v-30.300L1525 374M758.500 356.500 1525 374"/>
      <g clip-path="url(#capClip)">
        <path d="M169 373h27v76h-27z" fill="url(#cap)"/>
        <g filter="url(#soft)">
          <path d="m175 384 6-5 10 24-3 6z" fill="#66635a"/><path d="m185 376 9-2v22z" fill="#b5b1a6"/>
          <path d="M170 396l8 3 14 10-10 5-12-4z" fill="#a6a8a3"/><path d="m176 412 12 1 2 4-10 3z" fill="#857d70"/>
          <path d="M198 414v36h-16l-8-10z" fill="#4c4c46"/><path d="m168 424 5 0 5 14 8 9-16 2z" fill="#a2a59f"/>
          <path d="M193 400h4v8h-4z" fill="#fff"/>
        </g>
      </g>
      <path d="M169.500 399.500v25" stroke="#111" stroke-width="1.300"/>
      <path d="${curve(CHINE)}L246 374z" fill="url(#band)"/>
      ${strips.map((i) => {
        const p: Pt[] = BILGE.map(([x, y]) => [x, TOP + ((y - TOP) * i) / N]);
        return svg`<path d="${curve(p)}${backLine(BILGE)}z" fill="url(#s${i})"/>`;
      })}
      <path d="${curve(BILGE.slice(1))}${backLine(CHINE)}z" fill="url(#band)"/>
      <path d="${curve(CHINE)}${backLine(KEEL)}z" fill="url(#keel)"/>
      <path d="${curve(BILGE.slice(1))}" fill="none" stroke="#9a9b94" stroke-width=".8" opacity=".7"/>
      <path class="edge" d="${curve(CHINE)}"/>
      <path class="edge" d="${curve(KEEL)}"/>
      <path class="edge" d="M246.500 518.700V373.500H1525M195.500 374v74.500"/>
    </svg>`;
  }
}

/* --------------------------------------------------------------- viewport */

@customElement("view-port")
export class ViewPort extends LitElement {
  static styles = [shared, css`
    :host { display: grid; grid-template: minmax(0, 1fr) auto / 253px 1fr auto; background: #fefefe; min-height: 0; }
    hull-model { grid-area: 1 / 1 / 3 / 4; }
    .tree { grid-area: 1 / 1; padding: 3px 0 0 3px; z-index: 1; }
    browser-tree { margin: 4px 0 0 -3px; }
    .cube { grid-area: 1 / 3; justify-self: end; align-self: start; margin: 18px 17px 0 0; }
    .comments { grid-area: 2 / 1; margin: 0 0 3px 3px; z-index: 1; }
    .nav { grid-area: 2 / 1 / 3 / 4; justify-self: center; align-self: start; margin-top: 1px; display: flex; height: 20px; background: #f1f1f1; color: #333; z-index: 1; }
    .nav button { width: 22px; height: 20px; }
    .nav .menu { width: 25px; gap: 2px; }
    .nav .wide { width: 27px; gap: 4px; }
    .nav .on { background: #0a96dc; }
    text { font-family: "Noto Sans", sans-serif; }
  `];
  render() {
    return html`
      <hull-model></hull-model>
      <aside class="tree"><side-panel heading="BROWSER"></side-panel><browser-tree></browser-tree></aside>
      <svg class="cube" width="66" height="66" viewBox="0 0 66 66" role="img" aria-label="View cube">
        <defs><linearGradient id="f" x1="0" y1="0" x2="0" y2="1"><stop offset="0" stop-color="#ebebec"/><stop offset="1" stop-color="#d2d2d3"/></linearGradient>
        <filter id="b" x="-20%" y="-60%" width="140%" height="220%"><feGaussianBlur stdDeviation="2"/></filter></defs>
        <path d="M9 56h50v4H5z" fill="#8f8f8f" filter="url(#b)"/>
        <path d="M9 13.500h43v43H9z" fill="url(#f)" stroke="#a6a6a8"/>
        <path d="M17 21.500h27v27H17z" fill="#d9dbdf"/>
        <text x="30.500" y="39" text-anchor="middle" font-size="10" font-weight="600" fill="#8b9096">RIGHT</text>
        <text x="9" y="12" font-size="12" font-weight="500" fill="#7d7dff">Z</text><text x="3" y="63" font-size="11" font-weight="600" fill="#f06a6a">X</text><text x="55" y="56" font-size="11" fill="#7df08a">Y</text>
        <path d="M52 54h3" stroke="#7df08a"/>
      </svg>
      <side-panel class="comments" heading="COMMENTS" collapsed></side-panel>
      <div class="nav" role="toolbar" aria-label="Navigation">
        <button class="wide" aria-label="Orbit">${box(14, 14, svg`<path d="M7 1v12M1.500 7.500h11" stroke="#333"/><path d="M7 0l2 3H5zM7 14l2-3H5z" fill="#333"/><path d="M4 10.500Q0 9 1 7t6-1.800T13 7.200 9 10" stroke="#333" fill="none"/>`)}${caret()}</button>
        <button aria-label="Look at">${box(13, 14, svg`<path d="M.5 5.500h12v8H.5z" fill="#fff" stroke="#555"/><path d="M3.500 8.500h6v2.500h-6z" fill="#b8bcc4" stroke="#555"/><path d="M.5 4q4-3 8-2.500M8.500.5h3.500v4" fill="none" stroke="#555" stroke-width="1.300"/>`)}</button>
        <button class="on" aria-label="Pan">${box(14, 14, svg`<path d="M3.500 8.500 1 6.200q1-1.200 2.200 0l1 .8L3.600 2.500q1.200-1 1.800.2L6 5.500 6.200 1.200q1.200-1 1.800 0v4.300l1-3.800q1.400-.6 1.600.6L10 6.200l1.200-2.400q1.500-.3 1.300 1L11 10l-1 3.500H5.500z" fill="#fff" stroke="#1d4e70" stroke-width=".6"/>`)}</button>
        <button aria-label="Zoom">${box(15, 14, svg`<circle cx="5" cy="5.500" r="3.800" fill="#e6eef0" stroke="#555"/><path d="m7.500 8.500 4 4" stroke="#333" stroke-width="2"/><path d="M9.500 2.500h5M12 0v5M9.500 7.500h5" stroke="#333"/>`)}</button>
        <button class="wide" aria-label="Fit">${box(15, 14, svg`<path d="M1 1h12v12H1z" stroke="#777" stroke-dasharray="1.500 1.500" fill="none"/><circle cx="6.500" cy="6.500" r="4.600" fill="#dfeeea" stroke="#555"/><path d="m10 10 4 3.500" stroke="#333" stroke-width="2"/>`)}${caret()}</button>
        <button class="menu" aria-label="Display">${box(14, 13, svg`<path d="M.8.800h12.400v8.800H.8z" fill="#fff" stroke="#555"/><path d="M2.500 2.500h9V8h-9z" fill="#7da4cf"/><path d="M5.500 10h3v1.500h2v1H3.500v-1h2z" fill="#555"/>`)}${caret()}</button>
        <button class="menu" aria-label="Grid">${box(14, 13, svg`<path d="M.5.500h13v12H.5zM3.700.5v12M7 .5v12M10.300.5v12M.5 3.500h13M.5 6.500h13M.5 9.500h13" fill="#fff" stroke="#666"/>`)}${caret()}</button>
        <button class="menu" aria-label="Viewports">${box(13, 12, svg`<path d="M.5.500h12v11H.5z" fill="#8aa9d2" stroke="#4b5f80"/><path d="M6.500.5v11M.5 6h12" stroke="#4b5f80" stroke-width="1.200"/>`)}${caret()}</button>
      </div>`;
  }
}

/* --------------------------------------------------------------- timeline */

const FEATURES = ("sketch sketch planes sketch sketch planes sketch planes sketch cylinder planes fillet cylinder fillet remove move fillet move loft planes sketch " +
  "planes sketch sketch sketch sketch loft patch planes sketch sketch planes sketch planes sketch").split(" ");
const MARKER = 31;

@customElement("time-line")
export class TimeLine extends LitElement {
  static styles = [shared, css`
    :host { display: flex; align-items: center; height: 42px; padding: 0 10px 0 3px; background: #f1f1f1; border-top: 2px solid #cfcfcf; }
    .play { display: flex; width: 115px; }
    .play button { width: 21px; height: 20px; }
    .track { flex: 1; }
    .items { display: flex; }
    .item { width: 20px; height: 26px; flex-direction: column; justify-content: flex-start; padding-top: 2px; position: relative; }
    .item .i { width: 20px; height: 20px; display: flex; align-items: center; justify-content: center; border-radius: 2px; }
    .item::after { content: ""; width: 1px; height: 4px; background: #bdbdbd; flex: none; }
    .later .i { opacity: .35; }
    .current .i { background: #e8e500; opacity: 1; }
    .current svg { opacity: .5; }
    .line { width: 681px; height: 2px; margin-left: 10px; background: #c4c4c4; }
    .head { position: absolute; left: -5px; top: 0; z-index: 1; }
  `];
  render() {
    return html`
      <div class="play" role="group" aria-label="Playback">
        <button aria-label="Start">${box(11, 12, svg`<path d="M1 .5v11" stroke="#444" stroke-width="1.500"/><path d="M10.500.500v11L2.500 6z" fill="#444"/>`)}</button>
        <button aria-label="Step back">${box(11, 11, svg`<path d="M8 .5v10L0 5.500z" fill="#444"/><path d="M9.800 3v5" stroke="#444" stroke-width="1.600"/>`)}</button>
        <button aria-label="Play">${box(10, 12, svg`<path d="M.5 0v12L10 6z" fill="#444"/>`)}</button>
        <button aria-label="Step forward">${box(11, 11, svg`<path d="M3 .5v10l8-5z" fill="#444"/><path d="M1.200 3v5" stroke="#444" stroke-width="1.600"/>`)}</button>
        <button aria-label="End">${box(11, 12, svg`<path d="M10 .5v11" stroke="#444" stroke-width="1.500"/><path d="M.5.500v11L8.500 6z" fill="#444"/>`)}</button>
      </div>
      <div class="track">
        <div class="items">${FEATURES.map((f, i) => html`<button class=${classMap({ item: true, later: i >= MARKER, current: i === 33 })} aria-label="${f} ${i + 1}">
          <span class="i">${i14(f)}</span>
          ${i === MARKER ? html`<span class="head">${box(10, 28, svg`<path d="M0 0h10v4L6 8v20H4.500V8L0 4z" fill="#5a5a5a"/>`)}</span>` : nothing}
        </button>`)}</div>
        <div class="line"></div>
      </div>
      <button aria-label="Timeline settings">${box(14, 14, gear)}</button>`;
  }
}

/* ---------------------------------------------------------------- taskbar */

const APPS: { name: string; state?: "run" | "many" | "front"; art: SVGTemplateResult }[] = [
  { name: "Cortana", art: svg`<circle cx="11" cy="11" r="5.800" fill="none" stroke="#111" stroke-width="1.800"/>` },
  { name: "Task view", art: svg`<path d="M5 8.500h8v5H5zM5 4v2h8V4M5 18v-2h8v2M16.500 4v14" fill="none" stroke="#222" stroke-width="1.200"/><path d="M15.500 8h2v3h-2z" fill="#222"/>` },
  { name: "Vantage", art: svg`<defs><linearGradient id="v" x2="0" y2="1"><stop offset="0" stop-color="#0fa0cf"/><stop offset="1" stop-color="#0b3c78"/></linearGradient></defs><path d="M2 2h18v14H2z" fill="url(#v)"/><path d="M4 9.500h14" stroke="#e6f6ff" stroke-width="1.600" stroke-dasharray="1.500 .5"/><path d="M7 18.500h8v2H7zM2 16h18v1H2z" fill="#fff"/>` },
  { name: "Edge", art: svg`<defs><linearGradient id="e" x1="0" x2="1"><stop offset="0" stop-color="#1b8fd8"/><stop offset="1" stop-color="#5bd65a"/></linearGradient></defs><circle cx="11" cy="11" r="10" fill="#0f5cb5"/><path d="M1 10.500C2 4 6 1 11 1c6 0 10 4 10 8.500 0 3-2.500 4.500-5 4.500-2 0-3-1-2.500-2 .8-2-.5-4.500-4-4.500S2 8 1 10.500z" fill="url(#e)"/><path d="M8 11.500q-1 5 5 7.500 4 .5 6-3-6 2-9-1.500-1-1.500-2-3z" fill="#1f86d6"/><path d="M14 12q-1 3 3 3.200 3 0 4.500-1.700-1.500 3.500-5 3.500-4-.5-4-4z" fill="#e6e0de"/>` },
  { name: "Mail", art: svg`<path d="M1 8.500 11 1.500l10 7V20H1z" fill="#0f5fae"/><path d="M3 8.500h16v6H3z" fill="#fff"/><path d="M1 9.500 11 15l10-5.500V20H1z" fill="#3cb4f0"/><path d="M21 9.500V20H11z" fill="#1e93df"/>` },
  { name: "File Explorer", state: "run", art: svg`<path d="M2 4h7l2 2h9v13H2z" fill="#e0a526"/><path d="M2 7h18v12H2z" fill="#fcd462"/><path d="M5 12.500h12V19h-3.500v-3h-5v3H5z" fill="#3a94dc"/>` },
  { name: "Chrome", state: "run", art: svg`<circle cx="11" cy="11" r="9.500" fill="#f9cf2c"/><path d="M11 11 2.700 6.300A9.500 9.500 0 0 1 19.300 6.300H11z" fill="#e0402f"/><path d="M11 11 2.700 6.300A9.500 9.500 0 0 0 10.500 20.500L15 13.200z" fill="#24a050"/><path d="M11 6.300h8.300" stroke="#e0402f"/><circle cx="11" cy="11" r="4.600" fill="#fff"/><circle cx="11" cy="11" r="3.600" fill="#3e82ee"/>` },
  { name: "Opera", state: "run", art: svg`<ellipse cx="11" cy="11" rx="7.200" ry="8.200" fill="none" stroke="#e0141e" stroke-width="4"/><path d="M13 1.500q7 2 7 9.500t-7 9.500q3.500-4 3.500-9.500T13 1.500z" fill="#a60d14"/>` },
  { name: "Firefox", art: svg`<circle cx="11" cy="12" r="8.800" fill="#ff8a1e"/><path d="M11 20.800a8.800 8.800 0 0 1-8.700-9Q4 14 6 17t9-1q3-3 1-8 4 2 3.800 5a8.800 8.800 0 0 1-8.800 7.800z" fill="#f4324f"/><path d="M12 1q5 3 6.500 7.500L15 9q-1-4-5-4 0-2 2-4z" fill="#ffca28"/><circle cx="10.800" cy="11.800" r="4" fill="#7a3fd6"/><path d="M3 6q3-1 5 1l4 1.500q-2 2-5 1.500z" fill="#ffa726"/>` },
  { name: "Home", art: svg`<path d="M11 2 1 11.500h3V20h5v-5h4v5h5v-8.500h3z" fill="#fff" stroke="#c4c4c4" stroke-width=".8"/>` },
  { name: "TeX", state: "run", art: svg`<path d="M2 2h18v18H2z" fill="#15133f"/><path d="M10 2h10v9H10z" fill="#26247e"/><text x="6" y="17" font-family="Liberation Serif, serif" font-size="7" fill="#e8cf52">TEX</text><path d="m4 7 3-4M8 6l1 2" stroke="#8bd14e"/>` },
  { name: "MATLAB", state: "many", art: svg`<path d="m1 13 6-3 2 4-3 2z" fill="#4a7fc0"/><path d="M7 10 13 2q-2 8-4 12z" fill="#2b4b7d"/><path d="M13 2q3 0 8 16-4-4-6-2t-4 4q-1-4-2-6 3-3 4-12z" fill="#d95319"/><path d="M13 2q3 1 8 16-4-5-6-2 0-8-2-14z" fill="#8e1f0c"/>` },
  { name: "McAfee", state: "run", art: svg`<path d="M2 1.500 11 6l9-4.500V16l-9 4.800L2 16z" fill="#c4242e"/><path d="M6 7.500 11 10l5-2.500v6L11 16.200 6 13.500z" fill="#e6dcd8"/><path d="M8 6h6v4l-3 2-3-2z" fill="#c4242e"/>` },
  { name: "Excel", state: "run", art: svg`<path d="M2 2h18v18H2z" fill="#e8f4e6" stroke="#2e8b46"/><path d="m4 5 8 12M12 5 4 17" stroke="#1f7a3c" stroke-width="2.800"/><path d="M12 11h8v9h-9z" fill="#d8efd6" stroke="#4ca35c"/><path d="M12 14h8M12 17h8M16 11v9" stroke="#4ca35c" stroke-width=".8"/>` },
  { name: "Photos", state: "many", art: svg`<path d="M1.500 2h19v18h-19z" fill="#1f8fe0"/><path d="M1.500 15 8 8l6 6 2-2 4.500 4v4h-19z" fill="#0c3a78"/><circle cx="15.500" cy="6.500" r="1.800" fill="#fff"/>` },
  { name: "Fusion 360", state: "front", art: svg`<path d="M1 2h14l5 4v14H1z" fill="#fbe2c9"/><path d="M6 3h10v4H9.500v2.500H15V13H9.500v5H6z" fill="#c97a35"/><path d="M6 3h3.500v15H6z" fill="#a95f22"/><path d="M13 17h6v2h-6z" fill="#fff"/>` },
];

@customElement("task-bar")
export class TaskBar extends LitElement {
  static styles = [shared, css`
    :host { display: flex; height: 33px; color: #1a1a1a; font: 11px/14px "Noto Sans", sans-serif;
      background: linear-gradient(90deg, #e6d8d0, #eaddd5 20%, #e5e0df 33%, #dce3ec 41%, #e2e1e5 47%, #e8ddd6 55%, #ebddd4 75%, #e4d9d6); }
    .start { width: 41px; }
    .search { width: 286px; display: flex; align-items: center; gap: 9px; padding: 0 9px; background: #fff; border: 1px solid #c9c0bb; }
    .search input { flex: 1; min-width: 0; border: 0; outline: 0; padding: 0; background: none; font: 12px/16px "Noto Sans", sans-serif; color: #333; }
    .search input::placeholder { color: #444; opacity: 1; }
    .apps { width: 654px; display: grid; grid-template-columns: repeat(16, 1fr); }
    .app { position: relative; padding-bottom: 1px; }
    .app.on::after { content: ""; position: absolute; left: 4px; right: 4px; bottom: 0; height: 2px; background: #2f78c4; }
    .app.many::after { background: linear-gradient(90deg, #2f78c4 80%, #8fb4dc 80%); }
    .app.front { background: #f6f0ed; }
    .app.front::after { left: 0; right: 0; }
    .tray { flex: 1; display: flex; align-items: center; justify-content: flex-end; padding-right: 3px; }
    .weather { gap: 8px; margin-right: 14px; }
    .sys { display: flex; align-items: center; gap: 7px; }
    .lang { margin-left: 8px; font-size: 10px; }
    .clock { margin: 0 11px 0 8px; text-align: center; font: 9px/15px "Noto Sans", sans-serif; }
    .peek { width: 1px; height: 33px; background: #b5aba7; margin-left: 8px; }
  `];
  render() {
    return html`
      <button class="start" aria-label="Start">${box(14, 14, svg`<path d="M0 2 6 1v5.600H0zM6.800.9 14 0v6.600H6.800zM0 7.400h6V13l-6-1zM6.800 7.400H14V14l-7.200-.9z" fill="#000"/>`)}</button>
      <label class="search">
        ${box(14, 14, svg`<circle cx="8.500" cy="5.500" r="4.600" fill="none" stroke="#222" stroke-width="1.200"/><path d="M5.200 8.800.6 13.400" stroke="#222" stroke-width="1.200"/>`)}
        <input type="text" aria-label="Search" placeholder="Type here to search">
      </label>
      <div class="apps">${APPS.map((a) => html`<button aria-label=${a.name} class=${classMap({ app: true, on: !!a.state, many: a.state === "many", front: a.state === "front" })}>${box(22, 22, a.art)}</button>`)}</div>
      <div class="tray">
        <button class="weather">
          ${box(18, 15, svg`<circle cx="6.500" cy="6" r="5.500" fill="#f8b92c"/><path d="M4 14.500a3.500 3.500 0 0 1-.3-7Q5.500 3.500 9.500 5t4 3a3.300 3.300 0 0 1 .5 6.500z" fill="#bfe0f8" stroke="#9cc9ee" stroke-width=".5"/>`)}
          <span>16°C</span><span>Mostly cloudy</span></button>
        <div class="sys">
          <button aria-label="Show hidden icons">${box(11, 8, svg`<path d="M1 6.500 5.500 2 10 6.500" fill="none" stroke="#222" stroke-width="1.200"/>`)}</button>
          <button aria-label="Battery">${box(14, 12, svg`<path d="M4.500 4H12v5H4.500z" fill="#111" stroke="#111"/><path d="M13 5.500h1v2.500h-1zM0 1.500h4v3H3V7H1.500V4.500H0zM.8 0h.8v2H.8zM2.400 0h.8v2h-.8z" fill="#111"/>`)}</button>
          <button aria-label="Network">${box(13, 13, svg`<path d="M1 11.500Q2 2 12 1.500M4 11.500Q5 5 12 4.500M7 11.500Q7.500 8 12 7.500" fill="none" stroke="#333" stroke-width="1.100"/><path d="M9.500 10h2.500v2H9.500z" fill="#222"/>`)}</button>
          <button aria-label="Volume">${box(14, 12, svg`<path d="M.6 4h2.200L6 1.200v9.600L2.800 8H.6z" fill="none" stroke="#222"/><path d="M8 4q1.500 2 0 4M10 2.500q2.500 3.500 0 7" fill="none" stroke="#333"/><path d="M12 1q3 5 0 10" fill="none" stroke="#aaa"/>`)}</button>
          <button aria-label="Meet now">${box(12, 14, svg`<path d="M1.500 4.500h6.500v5H1.500zM8 6l2.500-1.300v4.600L8 8M2.500 2Q6 0 9.500 2M2.500 12Q6 14 9.500 12" fill="none" stroke="#222" stroke-width="1.100"/>`)}</button>
        </div>
        <button class="lang">ENG</button>
        <button class="clock">11:51 AM<br>10/28/2021</button>
        <button aria-label="Notifications, 21 new">${box(23, 22, svg`<path d="M1 1h13v10H7l-3 3v-3H1z" fill="#111"/><path d="M3.500 3.500h8M3.500 5.700h8M3.500 8h5" stroke="#eee"/><circle cx="14" cy="13" r="7.300" fill="#d6d2d0" stroke="#777"/><text x="14" y="16.400" text-anchor="middle" font-size="9" font-weight="600">21</text>`)}</button>
        <span class="peek"></span>
      </div>`;
  }
}

@customElement("app-root")
export class AppRoot extends LitElement {
  static styles = css`
    :host { display: flex; flex-direction: column; height: 100vh; min-height: 700px; overflow: hidden; background: #fff; }
    view-port { flex: 1; }
  `;
  render(): TemplateResult {
    return html`<window-header></window-header><tool-ribbon></tool-ribbon><view-port></view-port><time-line></time-line><task-bar></task-bar>`;
  }
}
